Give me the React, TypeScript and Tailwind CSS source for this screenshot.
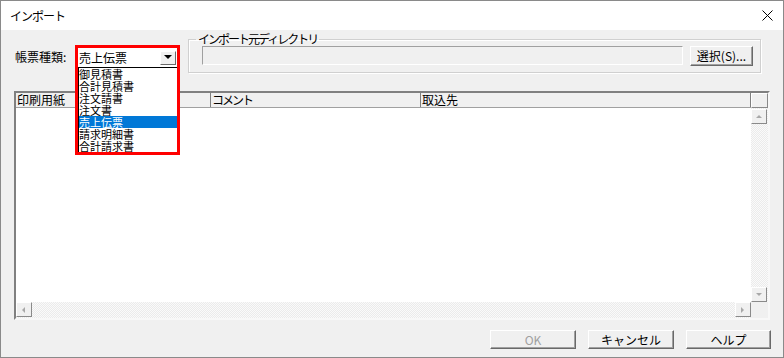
const font = "font-['Noto_Sans_CJK_JP','Noto_Sans',sans-serif]";

const items = ["御見積書", "合計見積書", "注文請書", "注文書", "売上伝票", "請求明細書", "合計請求書"];

function WinButton({ label, disabled, className }: { label: string; disabled?: boolean; className: string }) {
  return (
    <div
      className={`${className} flex items-center justify-center bg-[#f0f0f0] border border-t-white border-l-white border-r-[#696969] border-b-[#696969] shadow-[inset_-1px_-1px_#a0a0a0] text-[12px] leading-none ${
        disabled ? "text-[#a0a0a0]" : "text-black"
      }`}
    >
      {label}
    </div>
  );
}

function ArrowBtn({ dir }: { dir: "up" | "down" | "left" | "right" }) {
  const pts = {
    up: "1,5 4,2 7,5",
    down: "1,2 4,5 7,2",
    left: "5,1 2,4 5,7",
    right: "2,1 5,4 2,7",
  }[dir];
  return (
    <div className="w-[16px] h-[15px] flex items-center justify-center bg-[#f0f0f0] border border-t-white border-l-white border-r-[#8a8a8a] border-b-[#8a8a8a]">
      <svg width="8" height="8" viewBox="0 0 8 8">
        <polygon points={pts} fill="#a8a8a8" />
      </svg>
    </div>
  );
}

export default function App() {
  return (
    <div className={`w-[784px] h-[358px] border border-[#8a8a8a] bg-[#f0f0f0] flex flex-col text-black ${font}`}>
      {/* Title bar */}
      <div className="h-[29px] bg-white flex items-center justify-between pl-[9px] pr-[10px] shrink-0">
        <span className="text-[12px] tracking-[-1px]">インポート</span>
        <svg width="11" height="11" viewBox="0 0 11 11">
          <path d="M0.5 0.5 L10.5 10.5 M10.5 0.5 L0.5 10.5" stroke="#000" strokeWidth="1" />
        </svg>
      </div>

      <div className="relative flex-1 flex flex-col">
        {/* Top row */}
        <div className="h-[61px] flex items-start pl-[14px] pt-[9px]">
          <div className="w-[173px] mt-[12px] text-[12px] leading-[12px]">帳票種類:</div>
          <fieldset className="w-[573px] h-[40px] border border-[#d0d0d0] shadow-[1px_1px_white,inset_1px_1px_white] -mt-[6px] pl-[13px] pr-[7px] flex items-start">
            <legend className="-ml-[6px] px-[2px] text-[12px] leading-[12px] tracking-[-2px]">インポート元ディレクトリ</legend>
            <div className="flex items-start gap-[7px] mt-[1px] w-full">
              <div className="w-[481px] h-[19px] border border-t-[#a0a0a0] border-l-[#a0a0a0] border-r-white border-b-white bg-[#f0f0f0]" />
              <WinButton label="選択(S)..." className="w-[63px] h-[20px]" />
            </div>
          </fieldset>
        </div>

        {/* List view */}
        <div className="ml-[13px] w-[756px] h-[229px] flex flex-col border-2 border-t-[#808080] border-l-[#808080] border-r-[#f8f8f8] border-b-[#f8f8f8] bg-white">
          <div className="flex flex-1 min-h-0">
            <div className="flex-1 flex flex-col">
              <div className="h-[15px] flex text-[12px] leading-[13px] bg-[#f0f0f0] border-b border-[#a0a0a0]">
                <div className="w-[195px] pl-[1px] border-r border-[#808080]">印刷用紙</div>
                <div className="w-[210px] pl-[1px] border-r border-[#808080] tracking-[-2px]">コメント</div>
                <div className="flex-1 pl-[1px] border-r border-[#808080]">取込先</div>
              </div>
              <div className="flex-1 bg-white bg-[radial-gradient(circle,#e8e8e8_0.7px,transparent_0.7px)] bg-[length:6px_6px]" />
            </div>
            <div className="w-[17px] flex flex-col bg-[repeating-conic-gradient(#ebebeb_0_25%,#fafafa_0_50%)] bg-[length:2px_2px]">
              <div className="h-[15px] bg-[#f0f0f0] border border-t-white border-l-white border-r-[#8a8a8a] border-b-[#8a8a8a]" />
              <div className="mt-[1px]">
                <ArrowBtn dir="up" />
              </div>
              <div className="flex-1" />
              <ArrowBtn dir="down" />
            </div>
          </div>
          <div className="h-[16px] flex bg-[repeating-conic-gradient(#ebebeb_0_25%,#fafafa_0_50%)] bg-[length:2px_2px]">
            <ArrowBtn dir="left" />
            <div className="flex-1" />
            <ArrowBtn dir="right" />
            <div className="w-[17px] bg-[#f0f0f0]" />
          </div>
        </div>

        {/* Buttons */}
        <div className="flex justify-end gap-[12px] pr-[12px] mt-[10px]">
          <WinButton label="OK" disabled className="w-[86px] h-[19px]" />
          <WinButton label="キャンセル" className="w-[86px] h-[19px]" />
          <WinButton label="ヘルプ" className="w-[85px] h-[19px]" />
        </div>

        {/* Open combo dropdown (overlay) */}
        <div className="absolute left-[74px] top-[15px] w-[105px] h-[110px] border-[3px] border-[#ff0000] bg-white overflow-hidden flex flex-col">
          <div className="h-[19px] flex items-center justify-between pl-[1px] pr-[1px] shrink-0">
            <span className="text-[12px] leading-[12px]">売上伝票</span>
            <div className="w-[16px] h-[14px] flex items-center justify-center bg-[#f0f0f0] border border-t-white border-l-white border-r-[#696969] border-b-[#696969]">
              <svg width="8" height="5" viewBox="0 0 8 5">
                <polygon points="0,0 8,0 4,4" fill="#000" />
              </svg>
            </div>
          </div>
          <div className="border-t border-l border-black flex flex-col">
            {items.map((it) => (
              <div
                key={it}
                className={`h-[12px] shrink-0 text-[11px] leading-[12px] ${
                  it === "売上伝票" ? "bg-[#0078d7] text-white" : ""
                }`}
              >
                {it}
              </div>
            ))}
          </div>
        </div>
      </div>
    </div>
  );
}
